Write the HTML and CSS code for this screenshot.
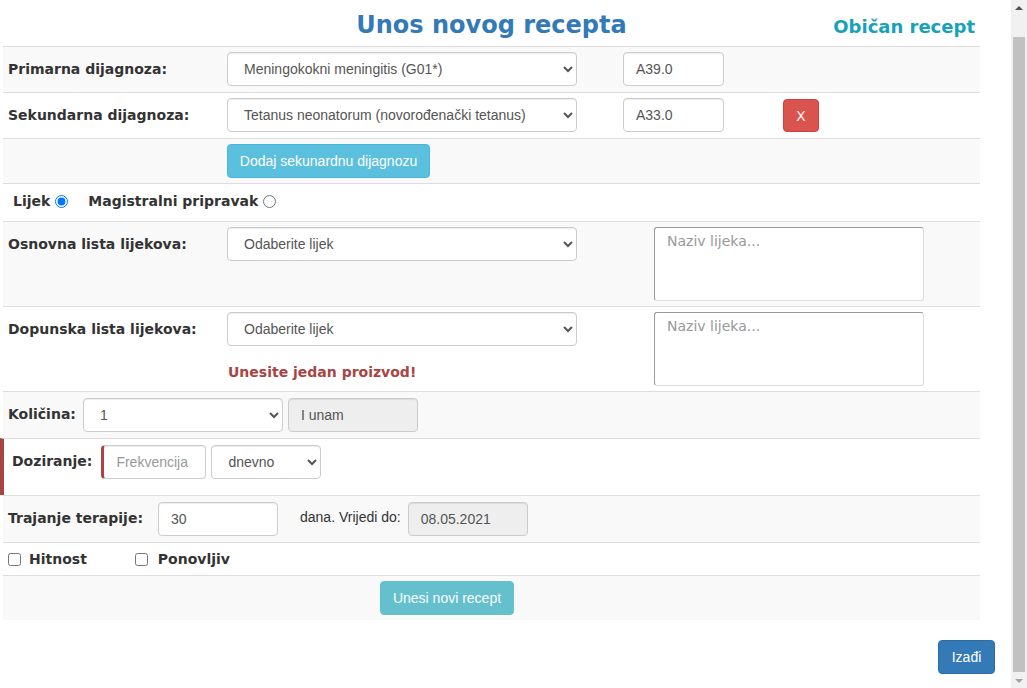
FILE: index.html
```html
<!DOCTYPE html>
<html lang="hr">
<head>
<meta charset="utf-8">
<title>Unos novog recepta</title>
<link rel="stylesheet" href="styles.css">
</head>
<body>
<div class="page">
  <div class="hdr">
    <span></span>
    <h3 class="title">Unos novog recepta</h3>
    <span class="type">Običan recept</span>
  </div>
  <div class="tbl">
    <div class="row odd">
      <span class="lbl">Primarna dijagnoza:</span>
      <select class="fc sel"><option>Meningokokni meningitis (G01*)</option></select>
      <input class="fc code" value="A39.0">
    </div>
    <div class="row">
      <span class="lbl">Sekundarna dijagnoza:</span>
      <select class="fc sel"><option>Tetanus neonatorum (novorođenački tetanus)</option></select>
      <input class="fc code" value="A33.0">
      <button class="btn btn-x">X</button>
    </div>
    <div class="row odd addrow">
      <span class="lbl"></span>
      <button class="btn btn-add">Dodaj sekunardnu dijagnozu</button>
    </div>
    <div class="row radios">
      <label class="rlbl">Lijek <input type="radio" name="tip" checked></label>
      <label class="rlbl mag">Magistralni pripravak <input type="radio" name="tip"></label>
    </div>
    <div class="row odd tall">
      <span class="lbl">Osnovna lista lijekova:</span>
      <select class="fc sel"><option>Odaberite lijek</option></select>
      <textarea class="ta" placeholder="Naziv lijeka..."></textarea>
    </div>
    <div class="row tall">
      <span class="lbl">Dopunska lista lijekova:</span>
      <div class="col">
        <select class="fc sel"><option>Odaberite lijek</option></select>
        <span class="err">Unesite jedan proizvod!</span>
      </div>
      <textarea class="ta" placeholder="Naziv lijeka..."></textarea>
    </div>
    <div class="row odd six">
      <span class="ilbl">Količina:</span>
      <select class="fc kol"><option>1</option></select>
      <input class="fc ro unam" value="I unam" readonly>
    </div>
    <div class="row six doz">
      <span class="ilbl dlbl">Doziranje:</span>
      <input class="fc frek" placeholder="Frekvencija">
      <select class="fc dnevno"><option>dnevno</option></select>
    </div>
    <div class="row odd six">
      <span class="ilbl">Trajanje terapije:</span>
      <input class="fc traj" value="30">
      <span class="txt">dana. Vrijedi do:</span>
      <input class="fc ro datum" value="08.05.2021" readonly>
    </div>
    <div class="row checks">
      <label class="clbl"><input type="checkbox"> Hitnost</label>
      <label class="clbl pon"><input type="checkbox"> Ponovljiv</label>
    </div>
    <div class="row odd last">
      <button class="btn btn-submit" disabled>Unesi novi recept</button>
    </div>
  </div>
  <div class="foot">
    <button class="btn btn-exit">Izađi</button>
  </div>
</div>
<div class="sb">
  <span class="arr up"></span>
  <span class="thumb"></span>
  <span class="arr down"></span>
</div>
</body>
</html>
```
FILE: styles.css
```css
html, body {
  margin: 0;
  height: 688px;
  overflow: hidden;
}
body {
  display: flex;
  font-family: "DejaVu Sans", Verdana, sans-serif;
  font-size: 14px;
  color: #333;
  background: #fff;
}
.page {
  width: 1011px;
  flex-shrink: 0;
}
.hdr {
  display: grid;
  grid-template-columns: 1fr auto 1fr;
  align-items: center;
  box-sizing: border-box;
  width: 977px;
  height: 46px;
  margin-left: 3px;
  padding-top: 3px;
}
.title {
  margin: 0;
  font-size: 24px;
  font-weight: bold;
  color: #337ab7;
  line-height: 40px;
}
.type {
  justify-self: end;
  padding-right: 5px;
  padding-top: 3px;
  font-size: 18px;
  font-weight: bold;
  color: #17a2b8;
}
.tbl {
  width: 977px;
  margin-left: 3px;
}
.row {
  display: flex;
  align-items: flex-start;
  border-top: 1px solid #ddd;
  padding: 5px 5px 6px;
  background: #fff;
}
.odd {
  background: #f9f9f9;
}
.tall {
  padding-bottom: 5px;
}
.addrow {
  padding-bottom: 5px;
}
.six {
  padding-top: 6px;
  padding-bottom: 6px;
}
.lbl {
  width: 219px;
  flex-shrink: 0;
  font-weight: bold;
  line-height: 20px;
  padding-top: 7px;
}
.ilbl {
  font-weight: bold;
  line-height: 20px;
  padding-top: 6px;
  margin-right: 7px;
}
.fc {
  box-sizing: border-box;
  height: 34px;
  border: 1px solid #ccc;
  border-radius: 4px;
  padding: 6px 12px;
  font: 14px "Liberation Sans", Arial, sans-serif;
  color: #555;
  background-color: #fff;
  box-shadow: inset 0 1px 1px rgba(0, 0, 0, .075);
  margin: 0;
}
.fc::placeholder {
  color: #999;
}
.sel {
  width: 350px;
}
.code {
  width: 101px;
  margin-left: 46px;
}
.btn {
  box-sizing: border-box;
  height: 34px;
  border: 1px solid transparent;
  border-radius: 4px;
  padding: 0;
  font: 14px "Liberation Sans", Arial, sans-serif;
  color: #fff;
  margin: 0;
  white-space: nowrap;
  text-align: center;
}
.btn-x {
  width: 36px;
  height: 33px;
  margin-left: 59px;
  margin-top: 1px;
  background: #d9534f;
  border-color: #d43f3a;
  font-size: 14px;
}
.btn-add {
  width: 203px;
  height: 34px;
  background: #5bc0de;
  border-color: #46b8da;
}
.radios {
  padding: 0 5px 3px;
  height: 34px;
  align-items: center;
}
.rlbl {
  display: flex;
  align-items: center;
  font-weight: bold;
  padding-left: 5px;
}
.rlbl input {
  margin: 0 0 0 5px;
  width: 13px;
  height: 13px;
  accent-color: #0075ff;
}
.mag {
  margin-left: 15px;
}
.ta {
  box-sizing: border-box;
  width: 270px;
  height: 74px;
  margin: 0 0 0 77px;
  border: 1px solid;
  border-color: #999 #ddd #ddd #999;
  border-radius: 3px;
  padding: 5px 12px;
  font: 14px "DejaVu Sans", Verdana, sans-serif;
  resize: none;
  background: #fff;
}
.ta::placeholder {
  color: #999;
}
.col {
  display: flex;
  flex-direction: column;
}
.err {
  margin-top: 16px;
  margin-left: 1px;
  font-weight: bold;
  color: #a94442;
  line-height: 20px;
}
.kol {
  width: 200px;
}
.unam {
  width: 130px;
  margin-left: 5px;
}
.ro {
  background-color: #eee;
}
.doz {
  margin-left: -3px;
  border-left: 4px solid #a94442;
  padding-left: 8px;
  height: 44px;
}
.dlbl {
  margin-right: 9px;
}
.frek {
  width: 105px;
  border-left: 3px solid #a94442;
  padding-left: 12px;
}
.dnevno {
  width: 110px;
  margin-left: 5px;
}
.traj {
  width: 120px;
  margin-left: 8px;
}
.txt {
  font: 14px "Liberation Sans", Arial, sans-serif;
  line-height: 20px;
  padding-top: 5px;
  margin: 0 7px 0 22px;
}
.datum {
  width: 120px;
}
.checks {
  padding: 0 5px;
  height: 32px;
  align-items: center;
}
.clbl {
  display: flex;
  align-items: center;
  font-weight: bold;
}
.clbl input {
  margin: 0 8px 0 0;
  width: 13px;
  height: 13px;
}
.pon {
  margin-left: 48px;
  gap: 2px;
}
.last {
  padding-bottom: 5px;
}
.btn-submit {
  margin-left: 372px;
  width: 134px;
  background: #17a2b8;
  border-color: #17a2b8;
  opacity: .65;
}
.foot {
  display: flex;
  justify-content: flex-end;
  padding: 20px 16px 0 0;
}
.btn-exit {
  width: 57px;
  background: #337ab7;
  border-color: #2e6da4;
}
.sb {
  width: 16px;
  flex-shrink: 0;
  background: #f1f1f1;
  display: flex;
  flex-direction: column;
  align-items: center;
}
.arr {
  width: 0;
  height: 0;
  border-left: 4px solid transparent;
  border-right: 4px solid transparent;
}
.up {
  margin-top: 6px;
  border-bottom: 4px solid #505050;
}
.thumb {
  width: 12px;
  margin-top: 27px;
  height: 635px;
  background: #c1c1c1;
}
.down {
  margin-top: 7px;
  border-top: 4px solid #a3a3a3;
}
```
